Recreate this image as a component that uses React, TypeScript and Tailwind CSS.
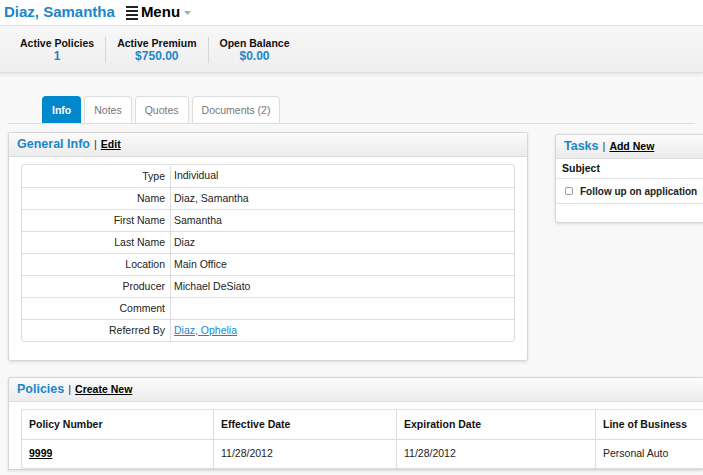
import type { ReactNode } from 'react';

const generalInfo: [string, ReactNode][] = [
  ['Type', 'Individual'],
  ['Name', 'Diaz, Samantha'],
  ['First Name', 'Samantha'],
  ['Last Name', 'Diaz'],
  ['Location', 'Main Office'],
  ['Producer', 'Michael DeSiato'],
  ['Comment', ''],
  [
    'Referred By',
    <a key="ref" href="#" className="text-[#1a87cc] underline">
      Diaz, Ophelia
    </a>,
  ],
];

const stats = [
  { label: 'Active Policies', value: '1' },
  { label: 'Active Premium', value: '$750.00' },
  { label: 'Open Balance', value: '$0.00' },
];

const tabs = ['Info', 'Notes', 'Quotes', 'Documents (2)'];

function PanelHeader({ title, action }: { title: string; action: string }) {
  return (
    <div className="flex h-[24px] items-center gap-1 rounded-t-[3px] border-b border-[#dcdcdc] bg-gradient-to-b from-[#fbfbfb] to-[#ececec] px-[8px]">
      <span className="text-[12.5px] font-bold text-[#1a87cc]">{title}</span>
      <span className="text-[11px] text-[#333]">|</span>
      <a href="#" className="text-[10.5px] font-bold text-black underline">
        {action}
      </a>
    </div>
  );
}

export default function App() {
  return (
    <div
      className="h-[475px] w-[703px] overflow-hidden bg-[#f8f8f8] text-[10.5px] text-[#222]"
      style={{ fontFamily: '"Liberation Sans", Arial, sans-serif' }}
    >
      <div className="flex h-[25px] items-center bg-white pl-[4px]">
        <span className="text-[15px] font-bold text-[#1a87cc]">Diaz, Samantha</span>
        <div className="ml-[11px] flex items-center">
          <div className="flex flex-col gap-[2px]">
            <span className="block h-[2px] w-[12px] bg-[#222]" />
            <span className="block h-[2px] w-[12px] bg-[#222]" />
            <span className="block h-[2px] w-[12px] bg-[#222]" />
            <span className="block h-[2px] w-[12px] bg-[#222]" />
          </div>
          <span className="ml-[3px] text-[15px] font-bold text-black">Menu</span>
          <svg width="7" height="4" viewBox="0 0 7 4" className="ml-[4px]">
            <path d="M0 0h7L3.5 4z" fill="#aaa" />
          </svg>
        </div>
      </div>

      <div className="flex h-[48px] items-center border-y border-[#dedede] bg-gradient-to-b from-[#f7f7f7] to-[#efefef] pt-[1px] pl-[9px] shadow-[0_2px_3px_rgba(0,0,0,0.08)]">
        {stats.map((s, i) => (
          <div
            key={s.label}
            className={`flex flex-col items-center px-[11px] leading-[13px] ${i > 0 ? 'border-l border-[#d6d6d6]' : ''}`}
          >
            <span className="text-[10.5px] font-bold text-[#111]">{s.label}</span>
            <span className="text-[12px] font-bold text-[#1a87cc]">{s.value}</span>
          </div>
        ))}
      </div>

      <div className="mx-[8px] mt-[23px] flex h-[28px] items-end gap-[3px] border-b border-[#dddddd] pl-[34px]">
        {tabs.map((t, i) => (
          <div
            key={t}
            className={`flex h-[27px] items-center rounded-t-[4px] border border-b-0 px-[9px] pt-[2px] ${
              i === 0
                ? 'border-[#0088cc] bg-[#0088cc] font-bold text-white'
                : 'border-[#dddddd] bg-white text-[#777]'
            }`}
          >
            {t}
          </div>
        ))}
      </div>

      <div className="mt-[8px] flex items-start">
        <div className="ml-[8px] w-[520px] shrink-0 rounded-[3px] border border-[#d6d6d6] bg-white shadow-[0_1px_3px_rgba(0,0,0,0.12)]">
          <PanelHeader title="General Info" action="Edit" />
          <div className="px-[12px] pt-[7px] pb-[18px]">
            <div className="overflow-hidden rounded-[3px] border border-[#dddddd]">
              {generalInfo.map(([label, value], i) => (
                <div
                  key={label}
                  className={`grid h-[22px] grid-cols-[149px_1fr] items-center ${i > 0 ? 'border-t border-[#dddddd]' : ''}`}
                >
                  <span className="border-r border-[#dddddd] pr-[5px] text-right leading-[21px]">{label}</span>
                  <span className="pl-[3px]">{value}</span>
                </div>
              ))}
            </div>
          </div>
        </div>

        <div className="mt-[2px] ml-[27px] w-[160px] shrink-0 rounded-l-[3px] border border-r-0 border-[#d6d6d6] bg-white shadow-[0_1px_3px_rgba(0,0,0,0.12)]">
          <PanelHeader title="Tasks" action="Add New" />
          <div className="flex h-[19px] items-center px-[6px] font-bold text-[#111]">Subject</div>
          <div className="flex h-[25px] items-center border-t border-[#e6e6e6] pl-[9px]">
            <span className="mr-[7px] inline-block h-[8px] w-[8px] shrink-0 rounded-[2px] border border-[#999] bg-white" />
            <span className="text-[10px] font-bold whitespace-nowrap">Follow up on application</span>
          </div>
          <div className="h-[19px] border-t border-[#dddddd]" />
        </div>
      </div>

      <div className="mt-[16px] ml-[8px] rounded-tl-[3px] border border-r-0 border-[#d6d6d6] bg-white shadow-[0_1px_3px_rgba(0,0,0,0.12)]">
        <PanelHeader title="Policies" action="Create New" />
        <div className="pt-[7px] pl-[12px]">
          <div className="rounded-l-[3px] border border-r-0 border-[#dddddd]">
            <div className="grid h-[29px] grid-cols-[192px_183px_199px_1fr] items-center font-bold text-[#111]">
              <span className="flex h-full items-center border-r border-[#dddddd] pl-[7px]">Policy Number</span>
              <span className="flex h-full items-center border-r border-[#dddddd] pl-[7px]">Effective Date</span>
              <span className="flex h-full items-center border-r border-[#dddddd] pl-[7px]">Expiration Date</span>
              <span className="pl-[7px] whitespace-nowrap">Line of Business</span>
            </div>
            <div className="grid h-[29px] grid-cols-[192px_183px_199px_1fr] items-center border-t border-[#dddddd]">
              <span className="flex h-full items-center border-r border-[#dddddd] pl-[7px]">
                <a href="#" className="font-bold text-black underline">
                  9999
                </a>
              </span>
              <span className="flex h-full items-center border-r border-[#dddddd] pl-[7px]">11/28/2012</span>
              <span className="flex h-full items-center border-r border-[#dddddd] pl-[7px]">11/28/2012</span>
              <span className="pl-[7px] whitespace-nowrap">Personal Auto</span>
            </div>
          </div>
        </div>
      </div>
    </div>
  );
}
